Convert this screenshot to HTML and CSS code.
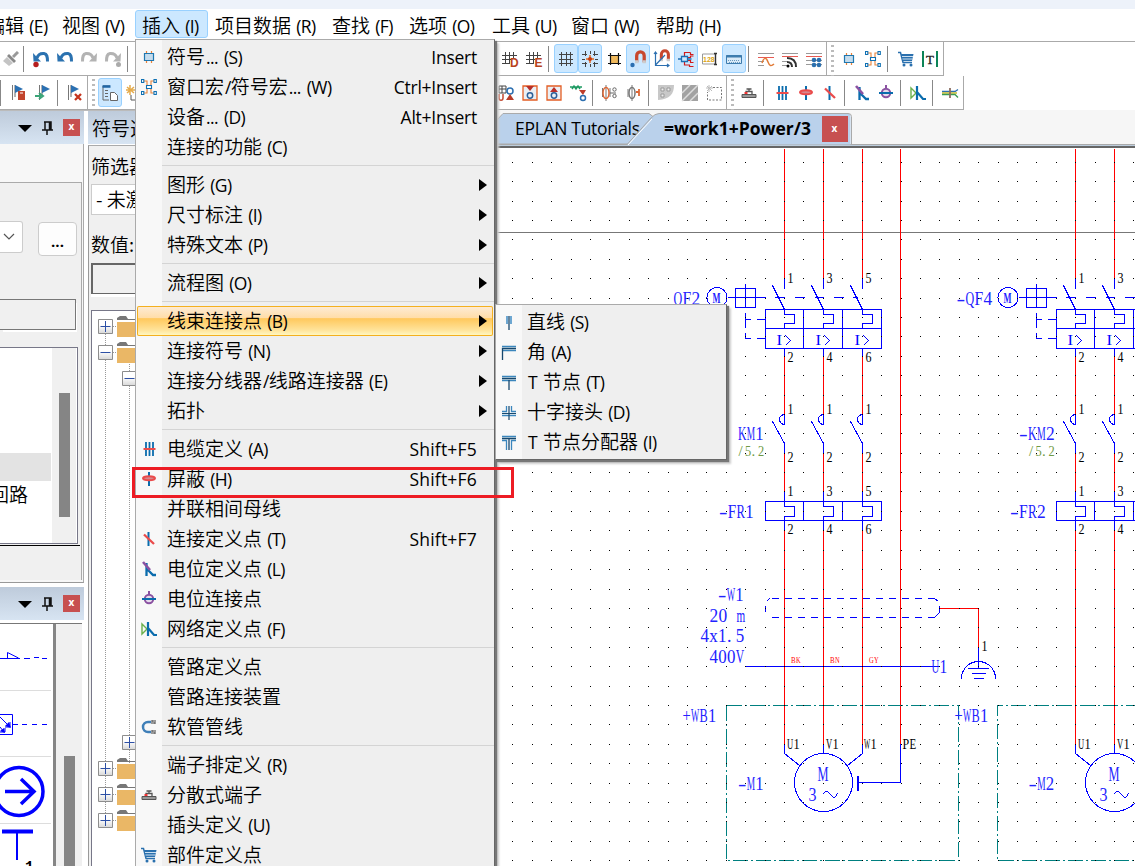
FILE: index.html
```html
<!DOCTYPE html>
<html lang="zh-CN">
<head>
<meta charset="utf-8">
<title>EPLAN</title>
<link rel="stylesheet" href="styles.css">
</head>
<body>
<svg class="defs" aria-hidden="true">
  <symbol id="i-symbol" viewBox="0 0 16 16"><path d="M5.500 2v3M10.500 2v3M5.500 12v2M10.500 12v2" stroke="#e8833a" stroke-width="1.200"/><path d="M3.500 4.500h9v7h-9z" fill="#c5dced" stroke="#1f77b0" stroke-width="1.200"/></symbol>
  <symbol id="i-macro" viewBox="0 0 16 16"><path d="M3 2h3v4l2 2 2-2V2h3M3 14h3v-4l2-2 2 2v4h3" fill="none" stroke="#e8833a" stroke-width="1.1"/><path d="M.5.5h2.3v3H.5zM13 .5h2.3v3H13zM.5 12.5h2.3v3H.5zM13 12.5h2.3v3H13zM5.500 6.500h5v3h-5z" fill="#fff" stroke="#0e70b3" stroke-width="1.1"/></symbol>
  <symbol id="i-cable" viewBox="0 0 16 16"><path d="M5 1v14M8.500 1v14M12 1v14" stroke="#0a6cad" stroke-width="1.800"/><path d="M2.500 8h12" stroke="#ea4b4b" stroke-width="2"/></symbol>
  <symbol id="i-shield" viewBox="0 0 16 16"><path d="M8 1v14" stroke="#0a6cad" stroke-width="2"/><ellipse cx="8" cy="7.200" rx="6" ry="2" fill="#d6888f" stroke="#ea4b4b" stroke-width="2"/></symbol>
  <symbol id="i-conn" viewBox="0 0 16 16"><path d="M7.500 1v14" stroke="#0a6cad" stroke-width="2"/><path d="M3 3.500l10 9.500" stroke="#ea4b4b" stroke-width="2.300"/></symbol>
  <symbol id="i-potdef" viewBox="0 0 16 16"><path d="M5.500 2v13M6 8l6 6h3" fill="none" stroke="#0a6cad" stroke-width="2.300"/><path d="M2 1l7 8" stroke="#8b52a2" stroke-width="2.600"/></symbol>
  <symbol id="i-pot" viewBox="0 0 16 16"><path d="M8 0v4" stroke="#8b52a2" stroke-width="2"/><circle cx="8" cy="8" r="4.200" fill="#e6dcec" stroke="#8b52a2" stroke-width="2"/><path d="M1 8h14" stroke="#0a6cad" stroke-width="2"/></symbol>
  <symbol id="i-net" viewBox="0 0 16 16"><path d="M1 3l5 5-5 5z" fill="none" stroke="#6ab04c" stroke-width="1.400"/><path d="M7 1v14M7 7l6 7h3" fill="none" stroke="#0a6cad" stroke-width="2.200"/></symbol>
  <symbol id="i-hose" viewBox="0 0 16 16"><path d="M11 3H7a5 5 0 0 0 0 10h4" fill="none" stroke="#3f7fb8" stroke-width="2.500"/><path d="M10 3h5M10 13h5" stroke="#999" stroke-width="4"/><path d="M11 2h1m1 2h1m-3 8h1m1 2h1" stroke="#555"/></symbol>
  <symbol id="i-term" viewBox="0 0 16 16"><path d="M1 9.500h14v3H1z" fill="#999" stroke="#555"/><path d="M5 9V6.500h6V9M8 6V4M5.500 4h5" fill="none" stroke="#555" stroke-width="1.300"/><path d="M3.500 7h3v2h-3z" fill="#e33"/></symbol>
  <symbol id="i-cart" viewBox="0 0 16 16"><path d="M0 1.500h2.500l2.500 10h9" fill="none" stroke="#2a70ae" stroke-width="1.500"/><path d="M3 3h12.500l-1.500 7H5z" fill="#2a70ae"/><path d="M4 5.500h11M4.500 8h10" stroke="#cde0f0"/><circle cx="6" cy="14" r="1.500" fill="#2a70ae"/><circle cx="13" cy="14" r="1.500" fill="#2a70ae"/></symbol>
  <symbol id="i-b1" viewBox="0 0 16 16"><path d="M6 1v8M10 1v8" stroke="#4b93c8" stroke-width="1.600"/><path d="M8 1v14" stroke="#17486e" stroke-width="1.300"/></symbol>
  <symbol id="i-b2" viewBox="0 0 16 16"><path d="M1 1.500h14M1 5.500h14" stroke="#3b86bd" stroke-width="1.300"/><path d="M1.500 15V3.500H15" fill="none" stroke="#17486e" stroke-width="1.300"/></symbol>
  <symbol id="i-b3" viewBox="0 0 16 16"><path d="M1 1.500h14M1 5.500h14" stroke="#3b86bd" stroke-width="1.300"/><path d="M1 3.500h14M8 5v10" stroke="#17486e" stroke-width="1.300"/></symbol>
  <symbol id="i-b4" viewBox="0 0 16 16"><path d="M5.500 1v5.500H1M10.500 1v5.500H15M1 10.500h14" fill="none" stroke="#3b86bd" stroke-width="1.300"/><path d="M8 1v14M1 8.500h14" stroke="#17486e" stroke-width="1.200"/></symbol>
  <symbol id="i-b5" viewBox="0 0 16 16"><path d="M1 1.500h14M1 5.500h4.500V15M15 5.500h-4.500V15" fill="none" stroke="#3b86bd" stroke-width="1.300"/><path d="M1 3.500h14M8 4v11" stroke="#17486e" stroke-width="1.300"/></symbol>
  <symbol id="i-brush" viewBox="0 0 16 16"><path d="M15 1l-5 5" stroke="#999" stroke-width="3"/><path d="M6 3l7 7-2 2-7-7z" fill="#888"/><path d="M4 6l6 6-4 3-6-5z" fill="#c4c4c4"/></symbol>
  <symbol id="i-undo" viewBox="0 0 16 16"><path d="M4 7C5 3.500 8 2.300 11 2.500c3 .5 3.500 3 3.500 8" fill="none" stroke="currentColor" stroke-width="3"/><path d="M0 2l.5 8.500H8z" fill="currentColor"/></symbol>
  <symbol id="i-redo" viewBox="0 0 16 16"><path d="M12 7C11 3.500 8 2.300 5 2.500c-3 .5-3.500 3-3.500 8" fill="none" stroke="currentColor" stroke-width="3"/><path d="M16 2l-.5 8.500H8z" fill="currentColor"/></symbol>
  <symbol id="i-grid" viewBox="0 0 16 16"><path d="M3.500 1v14M8.500 1v14M12.500 1v14M1 3.500h14M1 8.500h14M1 12.500h14" stroke="#444" stroke-width="1"/></symbol>
  <symbol id="i-gridl" viewBox="0 0 16 16"><path d="M3.500 1v12M7.500 1v12M11.500 1v6M0 4.500h15M0 8.500h9M0 12.500h8" stroke="#444" stroke-width="1"/></symbol>
  <symbol id="i-flag" viewBox="0 0 16 16"><path d="M1.500 0v15" stroke="#777"/><path d="M4 0v12" stroke="#999" stroke-width="1.500"/><path d="M4 0l8 4-8 4z" fill="#2b70b2"/></symbol>
  <symbol id="i-magnet" viewBox="0 0 16 16"><path d="M5 13V6a4 4 0 0 1 8 0v7" fill="none" stroke="#c8482e" stroke-width="3.500"/><path d="M3.200 11h3.600v3H3.200zM11.200 11h3.600v3h-3.600z" fill="#ccc"/></symbol>
</svg>

<div class="app">
  <div class="titlestrip"></div>
  <nav class="menubar">
    <span class="mi first">编辑 <i>(E)</i></span><span class="mi">视图 <i>(V)</i></span><span class="mi open">插入 <i>(I)</i></span><span class="mi">项目数据 <i>(R)</i></span><span class="mi">查找 <i>(F)</i></span><span class="mi">选项 <i>(O)</i></span><span class="mi">工具 <i>(U)</i></span><span class="mi">窗口 <i>(W)</i></span><span class="mi">帮助 <i>(H)</i></span>
  </nav>

  <div class="toolbar one">
    <div class="tools left">
      <b class="btn half"><svg><use href="#i-brush"/></svg></b><s class="bar"></s>
      <b class="btn blue"><svg viewBox="0 0 16 16"><use href="#i-undo" width="16" height="16"/><circle cx="3" cy="13.500" r="2.700" fill="#b51d1d"/></svg></b>
      <b class="btn blue"><svg><use href="#i-undo"/></svg></b>
      <b class="btn grey"><svg><use href="#i-redo"/></svg></b>
      <b class="btn grey"><svg viewBox="0 0 16 16"><use href="#i-redo" width="16" height="16"/><circle cx="13.500" cy="13.500" r="2.500" fill="#aaa"/></svg></b><s class="bar"></s>
    </div>
    <div class="tools right">
      <b class="btn"><svg viewBox="0 0 16 16"><use href="#i-gridl" width="16" height="16"/><text x="8" y="16" class="letter">D</text></svg></b>
      <b class="btn"><svg viewBox="0 0 16 16"><use href="#i-gridl" width="16" height="16"/><text x="8.500" y="16" class="letter">E</text></svg></b><s class="bar"></s>
      <b class="btn on"><svg><use href="#i-grid"/></svg></b>
      <b class="btn on"><svg viewBox="0 0 16 16"><path d="M3.500 0v5M8.500 0v3M12.500 0v5M3.500 11v5M8.500 13v3M12.500 11v5M0 3.500h5M11 3.500h5M0 8.500h3M13 8.500h3M0 12.500h5M11 12.500h5" stroke="#444"/><path d="M8 4v8M4 8h8" stroke="#e66a1f" stroke-width="1.500"/><circle cx="8" cy="8" r="2" fill="#c23a10"/></svg></b>
      <b class="btn"><svg viewBox="0 0 16 16"><path d="M4 4h8v8H4z" fill="#f0b95c"/><path d="M4.500 2v12M12.500 2v12M2 4.500h13M2 12.500h13" stroke="#111" stroke-width="1.200"/></svg></b>
      <b class="btn on"><svg viewBox="0 0 16 16"><use href="#i-magnet" x="2" y="-1" width="15" height="15"/><circle cx="2.500" cy="14" r="2.200" fill="#2c6fb0"/></svg></b>
      <b class="btn"><svg viewBox="0 0 16 16"><use href="#i-magnet" x="3" y="-2" width="14" height="14"/><path d="M1.500 1v13.500H15M1.500 14L11 4M0 3l1.500-2L3 3M13 13l2 1.500-2 1.500" fill="none" stroke="#2c6fb0" stroke-width="1.200"/></svg></b>
      <b class="btn on"><svg viewBox="0 0 16 16"><path d="M6.500 5V1.500h6M12.500 1.500v2h3M9.500 6.500h3v-1.500h3M9.500 9.500h3v2h3M6.500 11v3h5v1.500h4" fill="none" stroke="#d21c1c" stroke-width="1.200"/><path d="M3.500 5.500h6v5h-6zM0 8h3.500M9.500 8h4" fill="none" stroke="#1c6fb4" stroke-width="1.300"/></svg></b>
      <b class="btn"><svg viewBox="0 0 16 16"><path d="M.5 3h13v10H.5z" fill="#fff" stroke="#999"/><text x="1" y="10.800" class="num">128</text><path d="M13.500 3v10M12 2.500h3M12 13.500h3" stroke="#333" stroke-width="1.400"/></svg></b>
      <b class="btn on"><svg viewBox="0 0 16 16"><path d="M.5 4.500h15v8H.5z" fill="#d9eaf7" stroke="#3d7cae"/><path d="M0 5.500h16" stroke="#3d7cae" stroke-width="2"/><path d="M2 9.500h12M3 11.500h11" stroke="#6899be" stroke-dasharray="1 1"/></svg></b><s class="bar"></s>
      <b class="btn"><svg viewBox="0 0 16 16"><path d="M0 2.500h16M0 10.500h6M0 14.500h6" stroke="#999"/><path d="M0 6.500h16" stroke="#e85a52"/><path d="M4 12c2-6 4-6 6-1s3 4 6 2" fill="none" stroke="#e17a36" stroke-width="1.500"/></svg></b>
      <b class="btn"><svg viewBox="0 0 16 16"><path d="M0 2.500h16M0 10.500h5M0 14.500h5" stroke="#999"/><path d="M0 5.500h16" stroke="#e85a52"/><path d="M5 7c6 0 9 3 9 9M5 11c3 0 5 2 5 5" fill="none" stroke="#333" stroke-width="2"/><circle cx="6" cy="15" r="1.500"/></svg></b>
      <b class="btn"><svg viewBox="0 0 16 16"><path d="M0 2.500h16M0 9.500h16M0 13.500h16" stroke="#999"/><path d="M0 5.500h16" stroke="#e85a52"/><g fill="#2c70ae"><circle cx="8" cy="9" r="2.300"/><circle cx="13" cy="9" r="2.300"/><circle cx="8" cy="14" r="2.300"/><circle cx="13" cy="14" r="2.300"/></g></svg></b>
      <s class="grip"></s>
      <b class="btn"><svg><use href="#i-symbol"/></svg></b><b class="btn"><svg><use href="#i-macro"/></svg></b><s class="bar wide"></s>
      <b class="btn"><svg><use href="#i-cart"/></svg></b>
      <b class="btn"><svg viewBox="0 0 16 16"><path d="M1 0v16M15 0v16" stroke="#0c8457" stroke-width="2"/><text x="4" y="13" class="tee">T</text></svg></b>
    </div>
  </div>

  <div class="toolbar two">
    <div class="tools left">
      <s class="bar edge"></s>
      <b class="btn"><svg viewBox="0 0 16 16"><use href="#i-flag" width="16" height="16"/><path d="M7 6h7v9H7z" fill="#c2452d"/><path d="M9 8h3" stroke="#fff"/></svg></b>
      <b class="btn"><svg viewBox="0 0 16 16"><use href="#i-flag" x="3" width="16" height="16"/><path d="M0 11h6M4 8l4 3-4 3" fill="none" stroke="#3ba578" stroke-width="2"/></svg></b><s class="bar"></s>
      <b class="btn"><svg viewBox="0 0 16 16"><use href="#i-flag" width="16" height="16"/><path d="M8 9l6 6M14 9l-6 6" stroke="#c5341d" stroke-width="2.300"/></svg></b>
      <s class="grip"></s>
      <b class="btn on"><svg viewBox="0 0 16 16"><path d="M1 1v14h6M1 1h7M3 5.500h3M3 8.500h3M3 11.500h3" fill="none" stroke="#666"/><path d="M.5 1.500h8" stroke="#1f66a6" stroke-width="2.500"/><path d="M8.500 7.500h4l3 3v5h-7z" fill="#fff" stroke="#666"/></svg></b>
      <b class="btn"><svg viewBox="0 0 16 16"><path d="M4 0v10M0 5h9M1 2l7 6M8 2L1 8" stroke="#e5aa49" stroke-width="1.500"/><path d="M5 10v5h10" fill="none" stroke="#555"/></svg></b>
    </div>
    <div class="tools right">
      <b class="btn"><svg viewBox="0 0 16 16"><path d="M1 1h7v7H1zM1 4h7M4 1v7" fill="none" stroke="#444"/><path d="M1 9v4c0 3 4 3 4 0V9" fill="none" stroke="#c44a31" stroke-width="1.500"/><circle cx="12" cy="6" r="3" fill="none" stroke="#2c6fb0" stroke-width="1.500"/><path d="M12 9l4 6H8z" fill="#b93c27"/></svg></b>
      <b class="btn"><svg viewBox="0 0 16 16"><path d="M1 1h14v14H1z" fill="#ebeff4" stroke="#e45e24" stroke-width="1.300"/><path d="M4 1h8l-4 5z" fill="#b82e28"/><circle cx="8" cy="10.500" r="2.700" fill="none" stroke="#2c5f98" stroke-width="1.500"/></svg></b>
      <b class="btn"><svg viewBox="0 0 16 16"><path d="M1 1h14v14H1z" fill="#ebeff4" stroke="#e45e24" stroke-width="1.300"/><path d="M4 7h8L8 2z" fill="#b82e28"/><circle cx="8" cy="10.500" r="2.700" fill="none" stroke="#2c5f98" stroke-width="1.500"/></svg></b>
      <b class="btn"><svg viewBox="0 0 16 16"><path d="M0 2h12M2 4l2-3 2 3 2-3 2 3" fill="none" stroke="#1d9a62" stroke-width="1.500"/><path d="M9 5h7l-3 5z" fill="#bd3d2a"/><circle cx="13" cy="13" r="2.500" fill="none" stroke="#2c6fb0" stroke-width="1.500"/></svg></b><s class="bar"></s>
      <b class="btn"><svg viewBox="0 0 16 16"><path d="M4 0v16M.5 3v9M8 3v9" stroke="#777"/><ellipse cx="4" cy="8" rx="3" ry="5.500" fill="none" stroke="#e06633" stroke-width="1.500"/><circle cx="12.500" cy="4.500" r="1.700" fill="none" stroke="#666"/><circle cx="12.500" cy="11" r="1.700" fill="none" stroke="#666"/><path d="M8 8h6" stroke="#666"/></svg></b>
      <b class="btn"><svg viewBox="0 0 16 16"><path d="M6 0v16M2 4v8" stroke="#777"/><ellipse cx="6" cy="8" rx="3" ry="5.500" fill="none" stroke="#777" stroke-width="1.500"/><path d="M10 7h3M13 4v7" stroke="#e06633" stroke-width="1.800"/></svg></b><s class="bar"></s>
      <b class="btn"><svg viewBox="0 0 16 16"><path d="M0 0h16c0 9-4 14-16 15z" fill="#c8c8c8"/><path d="M3 3h3v3H3zM9 3h3v3H9zM3 9h3v3H3z" fill="#eee" stroke="#999"/></svg></b>
      <b class="btn"><svg viewBox="0 0 16 16"><path d="M0 0h16v16H0z" fill="#a2a2a2"/><path d="M0 8l8-8M0 16L16 0M8 16l8-8" stroke="#ddd" stroke-width="1.500"/></svg></b>
      <b class="btn"><svg viewBox="0 0 16 16"><path d="M7 2.500h8.500v12.500H1.500V7" fill="none" stroke="#777" stroke-dasharray="2 1.500"/><path d="M3 0v7M0 3h7M1 1l5 5M6 1L1 6" stroke="#bbb"/></svg></b>
      <s class="grip"></s>
      <b class="btn"><svg><use href="#i-term"/></svg></b><s class="bar wide"></s>
      <b class="btn"><svg><use href="#i-cable"/></svg></b><b class="btn"><svg><use href="#i-shield"/></svg></b><b class="btn"><svg><use href="#i-conn"/></svg></b><s class="bar"></s>
      <b class="btn"><svg><use href="#i-potdef"/></svg></b><b class="btn"><svg><use href="#i-pot"/></svg></b><s class="bar"></s>
      <b class="btn"><svg><use href="#i-net"/></svg></b><s class="bar"></s>
      <b class="btn"><svg viewBox="0 0 16 16"><path d="M0 6.500h13l3-2" fill="none" stroke="#2c6fb0" stroke-width="1.300"/><path d="M0 8h15" stroke="#cfc03a" stroke-width="1.600"/><path d="M0 9.500h13l3 3" fill="none" stroke="#3c9a55" stroke-width="1.300"/><path d="M8 3v10" stroke="#8a6e62" stroke-width="1.800"/></svg></b>
    </div>
  </div>

  <main class="work">
    <aside class="side">
      <section class="pane upper">
        <header class="cap"><svg class="capicons" viewBox="0 0 44 18"><path d="M0 6h14l-7 7z"/><path d="M26 3h7v8M24 11h11M27 11V3M29 11v5M31.500 3v8" fill="none" stroke="#111" stroke-width="1.500"/></svg><span class="x">x</span></header>
        <div class="upperbody">
          <div class="pad"></div>
          <div class="group">
            <div class="row"><span class="combo"><svg viewBox="0 0 12 8"><path d="M1 1l5 5 5-5" fill="none" stroke="#555" stroke-width="1.200"/></svg></span><span class="more">...</span></div>
            <div class="box"></div>
            <div class="list"><div class="rows"><div class="sel"></div><div class="lbl">回路</div></div><div class="track"><div class="thumb"></div></div></div>
            <div class="rule"></div>
          </div>
        </div>
      </section>
      <section class="pane lower">
        <header class="cap"><svg class="capicons" viewBox="0 0 44 18"><path d="M0 6h14l-7 7z"/><path d="M26 3h7v8M24 11h11M27 11V3M29 11v5M31.500 3v8" fill="none" stroke="#111" stroke-width="1.500"/></svg><span class="x">x</span></header>
        <div class="gallery">
          <svg class="thumbs" viewBox="0 624 53 242"><path d="M0 690.500h51M0 756.500h51M0 823.500h51" stroke="#ddd"/><g fill="none" stroke="#00f"><path d="M0 658.500h20M7.500 658v-5.500l11 5.500M24 658.500h6M34 657.500h5M42 658.500h5M0 714.500h12.500v20H0M13 724.500h5M22 724.500h5M32 724.500h5M42 724.500h5"/><path d="M0 717l10 10m0-5v5H5M0 727l4 5m1-4v4H0"/><path d="M11 728l-6-2 4-4zM5 733l-5-2 4-3z" fill="#00f" stroke="none"/><circle cx="19" cy="791.500" r="24" stroke-width="3.500"/><path d="M5 791.500h28M21 779l13 12.500L21 804" stroke-width="3.500"/><path d="M2 831.500h31" stroke-width="4"/><path d="M17 833v27" stroke-width="2"/></g><text x="25" y="871" class="mini">1</text></svg>
          <div class="split"></div><div class="gtrack"><div class="gthumb"></div></div>
        </div>
      </section>
    </aside>

    <section class="nav">
      <header class="cap">符号选择</header>
      <div class="navbody">
        <div class="t filter">筛选器:</div>
        <div class="field">- 未激活 -</div>
        <div class="t value">数值:</div>
        <div class="vbox"></div>
        <div class="tree">
          <svg viewBox="93 312 60 554">
            <defs>
              <linearGradient id="tg" x2="0" y2="1"><stop offset=".4" stop-color="#fff"/><stop offset="1" stop-color="#d8d8d8"/></linearGradient>
              <symbol id="ex" viewBox="0 0 15 15"><path d="M.5.5h14v14H.5z" fill="url(#tg)" stroke="#8d8d8d"/><path d="M2.500 7.500h10" stroke="#2c4fa5"/></symbol>
              <symbol id="fold" viewBox="0 0 22 22"><path d="M0 4V2l3-2h6l2 3h11v1z" fill="#777"/><path d="M0 6h22v15H0z" fill="#eab766"/></symbol>
            </defs>
            <path d="M105.500 334V820M129.500 364v400M113 326.500h4M113 352.500h4M113 768.500h4M113 794.500h4M113 820.500h4" stroke="#999" stroke-dasharray="1 1"/>
            <g><use href="#ex" x="98" y="319" width="15" height="15"/><use href="#ex" x="98" y="345" width="15" height="15"/><use href="#ex" x="122" y="371" width="15" height="15"/><use href="#ex" x="122" y="735" width="15" height="15"/><use href="#ex" x="98" y="761" width="15" height="15"/><use href="#ex" x="98" y="787" width="15" height="15"/><use href="#ex" x="98" y="813" width="15" height="15"/></g>
            <path d="M105.500 321v11M129.500 737v11M105.500 763v11M105.500 789v11M105.500 815v11" stroke="#2c4fa5"/>
            <use href="#fold" x="117" y="316" width="22" height="22"/><use href="#fold" x="117" y="342" width="22" height="22"/><use href="#fold" x="117" y="758" width="22" height="22"/><use href="#fold" x="117" y="784" width="22" height="22"/><use href="#fold" x="117" y="810" width="22" height="22"/>
          </svg>
        </div>
      </div>
    </section>

    <section class="editor">
      <svg class="tabs" viewBox="495 110 640 38">
        <path d="M495 110h640v38H495z" fill="#f6f6f6"/>
        <path d="M495 144.500h640" stroke="#aaa"/>
        <path d="M495 122l8-8.500h146l4 3v27.500H495z" fill="#bad1eb" stroke="#aaa"/>
        <text x="515" y="135" class="tab" textLength="125">EPLAN Tutorials</text>
        <path d="M627 144.500L651 118q4-4.500 8-4.500h189q2.500 0 2.500 3v28z" fill="#bad1eb"/>
        <path d="M627 144.500L651 118q4-4.500 8-4.500h189q3.500 0 3.500 3v28" fill="none" stroke="#aaa"/>
        <path d="M628 145L652 119" stroke="#fff"/>
        <path d="M495 145.500h640" stroke="#bccddd"/><path d="M495 147h640" stroke="#666" stroke-width="2"/>
        <text x="664" y="135" class="tab act" textLength="147">=work1+Power/3</text>
        <path d="M822 116h26v26h-26z" fill="#c75050"/><text x="831.500" y="132" class="tx">x</text>
      </svg>
      <svg class="sheet" viewBox="495 148 640 718">
        <defs>
          <g id="phase">
            <path class="r" d="M0 148V278M0 356V413M0 453V491M0 530V743"/>
            <path class="b" d="M0 278V288M-12 285L0 309M0 309V314H10V323H0V328M0 348V356M0 413V424M0 414A5 5 0 0 0 0 424M-12 421L0 443V453M0 491V506H10V516H0V530M0 743V753"/>
            <g class="k"><text x="3" y="413" textLength="6">1</text><text x="3" y="461" textLength="6">2</text></g>
            <text class="ig" x="-8" y="344.500" textLength="5.500">I</text><path class="b" d="M1 335L6 340L1 345"/>
          </g>
          <g id="motor">
            <g transform="translate(784 0)"><use href="#phase"/></g><g transform="translate(823 0)"><use href="#phase"/></g>
            <path class="b" d="M727 297H735M735 288H755V307H735zM735 297H765M745 283V307M745 312V327M745 332V338H750M745 319H750M756 319H765M756 338H765M774 297H784M794 297H804M814 297H823M833 297H843M852 297H857"/>
            <path class="b" d="M765 309H881V348H765zM765 328H881M803 309V348M842 309V348M765 501H881V520H765zM803 501V520M842 501V520M784 753L799 765"/>
            <circle class="b" cx="716.500" cy="297" r="10"/><circle class="b" cx="823" cy="782" r="29"/>
            <path class="b" d="M822 794q4-6 8 0t7-1"/>
            <g class="m"><text x="712" y="302" textLength="8" class="bold">M</text><text x="817" y="780" class="big" textLength="11">M</text><text x="808" y="800" textLength="8">3</text></g>
            <g class="k"><text x="787" y="282" textLength="6">1</text><text x="826" y="282" textLength="6">3</text><text x="787" y="361" textLength="6">2</text><text x="826" y="361" textLength="6">4</text><text x="787" y="495" textLength="6">1</text><text x="826" y="495" textLength="6">3</text><text x="787" y="533" textLength="6">2</text><text x="826" y="533" textLength="6">4</text><text x="786.500" y="748" textLength="13">U1</text><text x="825.500" y="748" textLength="13">V1</text></g>
          </g>
        </defs>
        <path d="M495 148h640v718H495z" fill="#fff"/>
        <g transform="translate(.5 .5)">
          <path d="M495 232H1135" stroke="#777" class="c"/>
          <g transform="translate(862 0)"><use href="#phase"/></g>
          <use href="#motor"/>
          <g transform="translate(291 0)"><use href="#motor"/></g>
          <path class="r" d="M900 148V743M939 608H978V646"/>
          <path class="b" d="M900 743V782H858M862 753L847 765M745 666H939M978 646V668"/>
          <path class="b" d="M857.500 775V790" stroke-width="2"/>
          <path class="b" stroke-dasharray="7 6" d="M771 598H934M771 617H934"/><path class="b" d="M766 601l3-3M765 605v6M934 598l4 3M939 605v7M938 613l-4 4"/>
          <path class="b" d="M961 678A17 17 0 0 1 995 678M967 668H988M971 673H985M973 678H983"/>
          <path class="t" d="M726 705H958V860H726zM1140 705H997V860H1140"/>
          <g class="k"><text x="865" y="282" textLength="6">5</text><text x="865" y="361" textLength="6">6</text><text x="865" y="495" textLength="6">5</text><text x="865" y="533" textLength="6">6</text><text x="863.500" y="748" textLength="13">W1</text><text x="902" y="748" textLength="14">PE</text><text x="981" y="650" textLength="6">1</text></g>
          <g class="m">
            <text x="673" y="304" textLength="27">QF2</text><text x="956" y="304" textLength="36">-QF4</text>
            <text x="737.500" y="439" textLength="26">KM1</text><text x="1018.500" y="439" textLength="36">-KM2</text>
            <text x="718.500" y="517" textLength="35">-FR1</text><text x="1009.500" y="517" textLength="36">-FR2</text>
            <text x="717.500" y="600" textLength="26">-W1</text><text x="709" y="621" textLength="36">20 m</text><text x="700" y="641" textLength="44">4x1.5</text><text x="709" y="662" textLength="35">400V</text>
            <text x="931" y="672" textLength="16">U1</text><text x="682" y="721" textLength="34">+WB1</text><text x="954" y="721" textLength="34">+WB1</text>
            <text x="737.500" y="789" textLength="26">-M1</text><text x="1028" y="789" textLength="26">-M2</text>
          </g>
          <g class="g"><text x="738" y="455" textLength="26">/5.2</text><text x="1028.500" y="455" textLength="26">/5.2</text></g>
          <g class="w"><text x="790.500" y="662" textLength="10">BK</text><text x="829.500" y="662" textLength="10">BN</text><text x="868.500" y="662" textLength="10">GY</text></g>
        </g>
        <path id="dots" stroke="#000" class="c"/>
      </svg>
    </section>
  </main>
</div>

<div class="menu" role="menu">
  <div class="it"><svg><use href="#i-symbol"/></svg><span>符号<i>... (S)</i></span><em>Insert</em></div>
  <div class="it"><svg><use href="#i-macro"/></svg><span>窗口宏<i>/</i>符号宏<i>... (W)</i></span><em>Ctrl+Insert</em></div>
  <div class="it"><span>设备<i>... (D)</i></span><em>Alt+Insert</em></div>
  <div class="it"><span>连接的功能 <i>(C)</i></span></div>
  <hr>
  <div class="it sub"><span>图形 <i>(G)</i></span></div>
  <div class="it sub"><span>尺寸标注 <i>(I)</i></span></div>
  <div class="it sub"><span>特殊文本 <i>(P)</i></span></div>
  <hr>
  <div class="it sub"><span>流程图 <i>(O)</i></span></div>
  <hr>
  <div class="it sub hot"><span>线束连接点 <i>(B)</i></span></div>
  <div class="it sub"><span>连接符号 <i>(N)</i></span></div>
  <div class="it sub"><span>连接分线器<i>/</i>线路连接器 <i>(E)</i></span></div>
  <div class="it sub"><span>拓扑</span></div>
  <hr>
  <div class="it"><svg><use href="#i-cable"/></svg><span>电缆定义 <i>(A)</i></span><em class="fk">Shift+F5</em></div>
  <div class="it"><svg><use href="#i-shield"/></svg><span>屏蔽 <i>(H)</i></span><em class="fk">Shift+F6</em></div>
  <div class="it"><span>并联相间母线</span></div>
  <div class="it"><svg><use href="#i-conn"/></svg><span>连接定义点 <i>(T)</i></span><em class="fk">Shift+F7</em></div>
  <div class="it"><svg><use href="#i-potdef"/></svg><span>电位定义点 <i>(L)</i></span></div>
  <div class="it"><svg><use href="#i-pot"/></svg><span>电位连接点</span></div>
  <div class="it"><svg><use href="#i-net"/></svg><span>网络定义点 <i>(F)</i></span></div>
  <hr>
  <div class="it"><span>管路定义点</span></div>
  <div class="it"><span>管路连接装置</span></div>
  <div class="it"><svg><use href="#i-hose"/></svg><span>软管管线</span></div>
  <hr>
  <div class="it"><span>端子排定义 <i>(R)</i></span></div>
  <div class="it"><svg><use href="#i-term"/></svg><span>分散式端子</span></div>
  <div class="it"><span>插头定义 <i>(U)</i></span></div>
  <div class="it"><svg><use href="#i-cart"/></svg><span>部件定义点</span></div>
</div>

<div class="menu submenu" role="menu">
  <div class="it"><svg><use href="#i-b1"/></svg><span>直线 <i>(S)</i></span></div>
  <div class="it"><svg><use href="#i-b2"/></svg><span>角 <i>(A)</i></span></div>
  <div class="it"><svg><use href="#i-b3"/></svg><span><i>T </i>节点 <i>(T)</i></span></div>
  <div class="it"><svg><use href="#i-b4"/></svg><span>十字接头 <i>(D)</i></span></div>
  <div class="it"><svg><use href="#i-b5"/></svg><span><i>T </i>节点分配器 <i>(I)</i></span></div>
</div>
<div class="marker"></div>
<script src="grid.js"></script>
</body>
</html>
```
FILE: styles.css
```css
* { box-sizing: border-box; }
body { margin: 0; width: 1135px; height: 866px; overflow: hidden; position: relative; background: #fff; color: #000; font: 350 19px/30px "Noto Sans CJK SC", sans-serif; }
i, em { font-style: normal; font-family: "Open Sans", sans-serif; font-weight: 400; font-size: 17.500px; letter-spacing: -.6px; }
i { margin-left: 1px; word-spacing: 2px; }
.defs { position: absolute; width: 0; height: 0; }
.app { display: flex; flex-direction: column; width: 1135px; height: 866px; overflow: hidden; }
.titlestrip { flex: none; height: 9px; background: #edf2fa; }

.menubar { flex: none; height: 32px; display: flex; align-items: flex-start; padding-top: 1px; white-space: nowrap; }
.mi { flex: none; height: 28px; line-height: 27px; padding: 0 6px; border: 1px solid transparent; width: 88px; }
.mi.first { width: 63px; margin-left: -8px; padding-left: 0; text-indent: -7px; }
.mi.open { background: #cce8ff; border-color: #99d1ff; border-radius: 3px; width: 73px; margin-left: -8px; padding-left: 6px; }
.mi:nth-child(4) { width: 117px; }
.mi:nth-child(5) { width: 77px; }
.mi:nth-child(6) { width: 83px; }
.mi:nth-child(7) { width: 79px; }
.mi:nth-child(8) { width: 85px; }

.toolbar { flex: none; display: flex; height: 35px; border-top: 1px solid #aaa; }
.toolbar.two { height: 34px; border-top: 0; }
.tools { display: flex; align-items: center; border-bottom: 1px solid #aaa; }
.tools.left { width: 498px; overflow: hidden; }
.one .right { width: 446px; border-right: 1px solid #aaa; }
.two .left { width: 494px; }
.two .right { width: 470px; border-right: 1px solid #aaa; }
.btn { flex: none; width: 24px; height: 29px; display: flex; align-items: center; justify-content: center; border: 1px solid transparent; border-radius: 3px; }
.btn svg { width: 16px; height: 16px; flex: none; overflow: visible; }
.btn.on { background: #cce8ff; border-color: #99d1ff; }
.btn.half { width: 21px; }
.btn.blue { color: #2b72b0; }
.btn.grey { color: #b3b3b3; }
.bar { flex: none; width: 8px; height: 26px; background: linear-gradient(90deg, transparent 2px, #888 2px, #888 3px, transparent 3px); }
.bar.wide { width: 9px; }
.bar.edge { width: 7px; background: linear-gradient(90deg, #888 1px, transparent 1px); }
.grip { flex: none; width: 11px; height: 34px; border-left: 1px solid #aaa; background: radial-gradient(circle at 1.500px 2px, #bbb 1.300px, transparent 1.500px) 4px 2px / 3px 5px repeat-y; }
.letter { font: bold 12px "Liberation Sans", sans-serif; fill: #b8431c; }
.num { font: bold 7px "Liberation Sans", sans-serif; fill: #dca514; }
.tee { font: 13px "Liberation Serif", serif; fill: #222; stroke: #222; stroke-width: .3; }

.work { flex: 1; display: flex; min-height: 0; border-top: 1px solid #bbb; }
.side { flex: none; width: 88px; background: #fff; display: flex; flex-direction: column; }
.cap { flex: none; height: 33px; background: linear-gradient(#becbdb, #d7e4f2); display: flex; align-items: center; line-height: 30px; padding-left: 18px; }
.capicons { width: 44px; height: 18px; flex: none; }
.x { width: 17px; height: 17px; margin-left: 1px; background: #c75050; color: #fff; font: bold 10px/15px "Open Sans", sans-serif; text-align: center; }
.pane { width: 84px; display: flex; flex-direction: column; }
.upper { height: 477px; }
.upperbody { flex: none; height: 439px; background: #f7f7f7; border-right: 1px solid #aaa; border-bottom: 1px solid #999; }
.pad { height: 38px; }
.group { width: 82px; height: 398px; background: #f0f0f0; border: solid #aaa; border-width: 1px 1px 0 0; }
.row { display: flex; padding-top: 38px; }
.combo { width: 23px; height: 32px; background: #fff; border: 1px solid #ccc; border-left: 0; border-radius: 0 3px 3px 0; display: flex; align-items: center; padding-left: 3px; }
.combo svg { width: 12px; height: 8px; }
.more { margin: 1px 0 0 15px; width: 39px; height: 34px; background: #fdfdfd; border: 1px solid #ccc; border-radius: 4px; text-align: center; font: bold 15px/36px "Open Sans", sans-serif; }
.box { width: 76px; height: 31px; margin-top: 43px; border: solid #777; border-width: 1px 1px 1px 0; box-shadow: 2px 3px 0 -1px #fff; }
.list { width: 78px; height: 197px; margin-top: 17px; background: #fff; border: solid #778; border-width: 1px 1px 1px 0; display: flex; }
.rule { width: 80px; height: 1px; margin-top: 1px; background: #000; }
.rows { width: 52px; overflow: hidden; padding-top: 105px; }
.sel { width: 51px; height: 28px; background: #e3e3e3; }
.lbl { height: 28px; line-height: 26px; margin-left: -10px; }
.track { width: 24px; background: #f0f0f0; padding: 45px 0 0 7px; }
.thumb { width: 11px; height: 124px; background: #858585; }
.lower { flex: 1; }
.gallery { flex: none; margin-top: 3px; width: 82px; height: 243px; border-top: 1px solid #777; display: flex; }
.thumbs { flex: none; width: 53px; height: 242px; }
.mini { font: bold 15px "Liberation Mono", monospace; fill: #000; }
.split { width: 3px; background: #858585; }
.gtrack { width: 26px; background: #f0f0f0; padding: 132px 0 0 8px; }
.gthumb { width: 11px; height: 110px; background: #858585; }

.nav { flex: none; width: 407px; display: flex; flex-direction: column; overflow: hidden; }
.nav .cap { padding-left: 4px; }
.navbody { flex: 1; background: #f0f0f0; border-left: 1px solid #999; border-top: 1px solid #aaa; margin-top: 1px; padding: 5px 0 0 2px; }
.t { height: 30px; line-height: 30px; }
.field { margin-top: 3px; height: 31px; line-height: 28px; background: #fff; border: 1px solid #ccc; padding-left: 4px; }
.value { margin-top: 15px; line-height: 28px; }
.vbox { margin-top: 3px; height: 31px; border: solid #666; border-width: 2px 0 1px 2px; box-shadow: 0 3px #fff; }
.tree { margin-top: 16px; height: 560px; background: #fff; border: solid #778; border-width: 1px 0 0 1px; padding: 1px 0 0 1px; }
.tree svg { display: block; width: 60px; height: 554px; }

.editor { flex: none; width: 640px; display: flex; flex-direction: column; margin-top: -1px; }
.tabs { display: block; width: 640px; height: 38px; }
.tab { font: 17.500px "Open Sans", sans-serif; }
.tab.act { font-weight: bold; }
.tx { font: bold 10px "Open Sans", sans-serif; fill: #fff; }
.sheet { display: block; width: 640px; height: 718px; }
.c, .r, .b, path.t { shape-rendering: crispEdges; fill: none; }
.r { stroke: #f00; }
.b { stroke: #00f; }
path.t { stroke: #008080; stroke-dasharray: 15 3 2 3; }
.sheet text { font-family: "Liberation Serif", serif; }
.k { font-size: 14px; fill: #000; }
.m { font-size: 18px; fill: #22f; }
.m .big { font-size: 20px; }
.m .bold { font-size: 15px; font-weight: bold; }
.ig { font-size: 14px; fill: #00f; }
.g { font-size: 15px; fill: #6f9a45; }
.w { font-size: 9px; fill: #f00; }

.menu { position: absolute; left: 135px; top: 39px; width: 360px; height: 840px; padding: 2px 0 0 1px; border: solid #aaa; border-width: 1px 0 0 1px; background: linear-gradient(90deg, #f8f8f8 26px, #efefef 26px); border-right: 1px solid #666; box-shadow: 2px 2px 1px #777, 4px 4px 2px #ccc; white-space: nowrap; }
.it { height: 30px; line-height: 28px; padding-left: 30px; display: flex; position: relative; margin-right: 1px; }
.it svg { position: absolute; left: 4px; top: 7px; width: 16px; height: 16px; }
.it em { margin-left: auto; padding-right: 16px; letter-spacing: -.25px; line-height: 31px; }
.it .fk { letter-spacing: .2px; }
.menu hr { height: 1px; margin: 3px 0 4px 25px; border: 0; background: #d4d4d4; }
.sub::after { content: ""; position: absolute; right: 6px; top: 9px; border: solid transparent; border-width: 6.500px 0 6.500px 8px; border-left-color: #000; }
.hot { background: linear-gradient(#fdecd7, #ffdda8 40%, #ffc85c 42%, #ffe39a 80%, #fffbc8); box-shadow: inset 0 0 0 1px #f4b01f; border-radius: 2px; }
.submenu { left: 495px; top: 304px; width: 232px; height: 156px; border-bottom: 1px solid #666; border-right: 1px solid #666; }
.submenu .it svg { top: 8px; }
.marker { position: absolute; left: 132px; top: 467px; width: 382px; height: 31px; border: 3px solid #ed1c24; }
```
FILE: grid.js
```js
// Snap grid of the schematic sheet
let d = '';
for (let r = 0; r < 37; r++) {
  const y = Math.round(161.700 + r * 19.400) + 0.5;
  for (let c = 0; c < 33; c++) {
    d += `M${Math.round(512.300 + c * 19.410)} ${y}h1`;
  }
}
document.getElementById('dots').setAttribute('d', d);

// Plotter lettering: every character sits in a cell of equal width
document.querySelectorAll('.sheet text[textLength]').forEach(t => {
  const chars = [...t.textContent];
  const total = +t.getAttribute('textLength');
  if (chars.length === 1) {
    t.setAttribute('lengthAdjust', 'spacingAndGlyphs');
    return;
  }
  const cell = total / chars.length;
  const x = +t.getAttribute('x');
  t.removeAttribute('textLength');
  t.textContent = '';
  chars.forEach((ch, i) => {
    const s = document.createElementNS('http://www.w3.org/2000/svg', 'tspan');
    s.textContent = ch;
    s.setAttribute('x', x + i * cell);
    if (!'. /'.includes(ch)) {
      s.setAttribute('textLength', cell - 0.300);
      s.setAttribute('lengthAdjust', 'spacingAndGlyphs');
    }
    t.appendChild(s);
  });
});
```
